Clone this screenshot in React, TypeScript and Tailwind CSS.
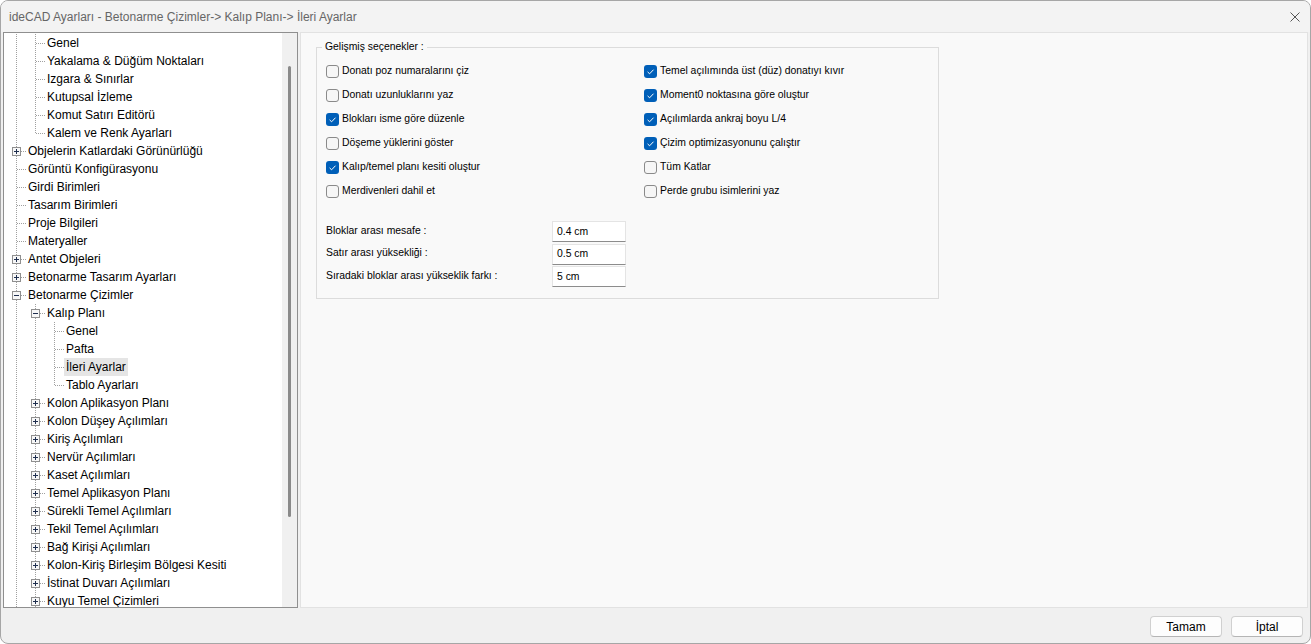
import React from "react"

type Row = { t: string; lv: number; exp?: "+" | "-"; last?: boolean; sel?: boolean }

const rows: Row[] = [
  { t: "Genel", lv: 1 },
  { t: "Yakalama & Düğüm Noktaları", lv: 1 },
  { t: "Izgara & Sınırlar", lv: 1 },
  { t: "Kutupsal İzleme", lv: 1 },
  { t: "Komut Satırı Editörü", lv: 1 },
  { t: "Kalem ve Renk Ayarları", lv: 1, last: true },
  { t: "Objelerin Katlardaki Görünürlüğü", lv: 0, exp: "+" },
  { t: "Görüntü Konfigürasyonu", lv: 0 },
  { t: "Girdi Birimleri", lv: 0 },
  { t: "Tasarım Birimleri", lv: 0 },
  { t: "Proje Bilgileri", lv: 0 },
  { t: "Materyaller", lv: 0 },
  { t: "Antet Objeleri", lv: 0, exp: "+" },
  { t: "Betonarme Tasarım Ayarları", lv: 0, exp: "+" },
  { t: "Betonarme Çizimler", lv: 0, exp: "-" },
  { t: "Kalıp Planı", lv: 1, exp: "-" },
  { t: "Genel", lv: 2 },
  { t: "Pafta", lv: 2 },
  { t: "İleri Ayarlar", lv: 2, sel: true },
  { t: "Tablo Ayarları", lv: 2, last: true },
  { t: "Kolon Aplikasyon Planı", lv: 1, exp: "+" },
  { t: "Kolon Düşey Açılımları", lv: 1, exp: "+" },
  { t: "Kiriş Açılımları", lv: 1, exp: "+" },
  { t: "Nervür Açılımları", lv: 1, exp: "+" },
  { t: "Kaset Açılımları", lv: 1, exp: "+" },
  { t: "Temel Aplikasyon Planı", lv: 1, exp: "+" },
  { t: "Sürekli Temel Açılımları", lv: 1, exp: "+" },
  { t: "Tekil Temel Açılımları", lv: 1, exp: "+" },
  { t: "Bağ Kirişi Açılımları", lv: 1, exp: "+" },
  { t: "Kolon-Kiriş Birleşim Bölgesi Kesiti", lv: 1, exp: "+" },
  { t: "İstinat Duvarı Açılımları", lv: 1, exp: "+" },
  { t: "Kuyu Temel Çizimleri", lv: 1, exp: "+" },
]

const DOT = "#a0a0a0"

// one 19px indent column of the tree, drawn like the win32 dotted guides
function Guide({ own, last, exp }: { own: boolean; last?: boolean; exp?: "+" | "-" }) {
  return (
    <svg width="19" height="18" className="shrink-0" shapeRendering="crispEdges">
      {!own && <line x1="9.5" y1="0" x2="9.5" y2="18" stroke={DOT} strokeDasharray="1 1" />}
      {own && (
        <>
          <line x1="9.5" y1="0" x2="9.5" y2={last ? 10 : 18} stroke={DOT} strokeDasharray="1 1" />
          <line x1="10" y1="9.5" x2="19" y2="9.5" stroke={DOT} strokeDasharray="1 1" />
          {exp && (
            <>
              <rect x="5.5" y="5.5" width="8" height="8" fill="#f7f7f7" stroke="#8f8f8f" />
              <line x1="7" y1="9.5" x2="12" y2="9.5" stroke="#1f2f4f" />
              {exp === "+" && <line x1="9.5" y1="7" x2="9.5" y2="12" stroke="#1f2f4f" />}
            </>
          )}
        </>
      )}
    </svg>
  )
}

function TreeRow({ r }: { r: Row }) {
  const cols = []
  for (let i = 0; i < r.lv; i++) cols.push(<Guide key={i} own={false} />)
  return (
    <div className="flex h-[18px] items-center">
      {cols}
      <Guide own last={r.last} exp={r.exp} />
      <span className={"px-[2px] h-[18px] leading-[18px] whitespace-nowrap " + (r.sel ? "bg-[#e5e5e5]" : "")}>
        {r.t}
      </span>
    </div>
  )
}

function Check({ on, label }: { on?: boolean; label: string }) {
  return (
    <div className="flex h-[24px] items-center gap-[3px]">
      {on ? (
        <div className="flex h-[13px] w-[13px] items-center justify-center rounded-[3px] bg-[#005fb8]">
          <svg width="13" height="13" viewBox="0 0 13 13">
            <polyline points="3.6,6.9 5.6,8.8 9.5,4.7" fill="none" stroke="white" strokeWidth="1" />
          </svg>
        </div>
      ) : (
        <div className="h-[13px] w-[13px] rounded-[3px] border border-[#8a8a8a] bg-[#f6f6f6]" />
      )}
      <span className="whitespace-nowrap">{label}</span>
    </div>
  )
}

function Field({ label, value }: { label: string; value: string }) {
  return (
    <div className="flex h-[21px] items-center">
      <span className="w-[226px] pb-[2px]">{label}</span>
      <div className="flex h-[21px] w-[74px] items-center border border-[#e4e4e4] border-b-[#8c8c8c] bg-white pl-[4px]">
        {value}
      </div>
    </div>
  )
}

export default function App() {
  return (
    <div className="h-[644px] w-[1311px] bg-white font-['Liberation_Sans',Arial,sans-serif] text-black">
      <div className="flex h-full w-full flex-col overflow-hidden rounded-[8px] border border-[#a6a6a6] bg-[#f0f0f0]">
        {/* title bar */}
        <div className="flex h-[31px] shrink-0 items-center justify-between bg-[#f3f3f3] pl-[8px] pr-[10px]">
          <span className="text-[12px] text-[#666666]">ideCAD Ayarları - Betonarme Çizimler-&gt; Kalıp Planı-&gt; İleri Ayarlar</span>
          <svg width="10" height="10" viewBox="0 0 10 10">
            <path d="M0.5 0.5 L9.5 9.5 M9.5 0.5 L0.5 9.5" stroke="#555" strokeWidth="1" />
          </svg>
        </div>

        <div className="flex h-[576px] shrink-0">
          {/* tree */}
          <div className="ml-[2px] flex w-[295px] border border-[#8f8f8f] bg-white">
            <div className="flex-1 overflow-hidden pl-[3px] pt-[1px] text-[12px]">
              {rows.map((r, i) => (
                <TreeRow key={i} r={r} />
              ))}
            </div>
            <div className="flex w-[15px] flex-col items-center bg-[#f0f0f0] pt-[33px]">
              <div className="h-[451px] w-[3px] rounded-full bg-[#8a8a8a]" />
            </div>
          </div>

          {/* options page */}
          <div className="ml-[2px] w-[1008px] border border-[#e2e2e2] bg-[#f9f9f9] pl-[15px] pt-[7px] text-[10.4px]">
            <fieldset className="w-[623px] border border-[#dcdcdc] px-[9px] pb-[11px]">
              <legend className="-ml-[4px] px-[3px] leading-[14px]">Gelişmiş seçenekler :</legend>
              <div className="flex pt-[5px]">
                <div className="w-[318px]">
                  <Check label="Donatı poz numaralarını çiz" />
                  <Check label="Donatı uzunluklarını yaz" />
                  <Check on label="Blokları isme göre düzenle" />
                  <Check label="Döşeme yüklerini göster" />
                  <Check on label="Kalıp/temel planı kesiti oluştur" />
                  <Check label="Merdivenleri dahil et" />
                </div>
                <div>
                  <Check on label="Temel açılımında üst (düz) donatıyı kıvır" />
                  <Check on label="Moment0 noktasına göre oluştur" />
                  <Check on label="Açılımlarda ankraj boyu L/4" />
                  <Check on label="Çizim optimizasyonunu çalıştır" />
                  <Check label="Tüm Katlar" />
                  <Check label="Perde grubu isimlerini yaz" />
                </div>
              </div>
              <div className="mt-[18px] flex flex-col gap-[1.5px]">
                <Field label="Bloklar arası mesafe :" value="0.4 cm" />
                <Field label="Satır arası yüksekliği :" value="0.5 cm" />
                <Field label="Sıradaki bloklar arası yükseklik farkı :" value="5 cm" />
              </div>
            </fieldset>
          </div>
        </div>

        {/* buttons */}
        <div className="flex flex-1 items-start justify-end gap-[9px] pr-[7px] pt-[8px]">
          <button className="h-[21px] w-[72px] rounded-[4px] border border-[#d0d0d0] border-b-[#b5b5b5] bg-[#fdfdfd] text-[12px]">Tamam</button>
          <button className="h-[21px] w-[72px] rounded-[4px] border border-[#d0d0d0] border-b-[#b5b5b5] bg-[#fdfdfd] text-[12px]">İptal</button>
        </div>
      </div>
    </div>
  )
}
